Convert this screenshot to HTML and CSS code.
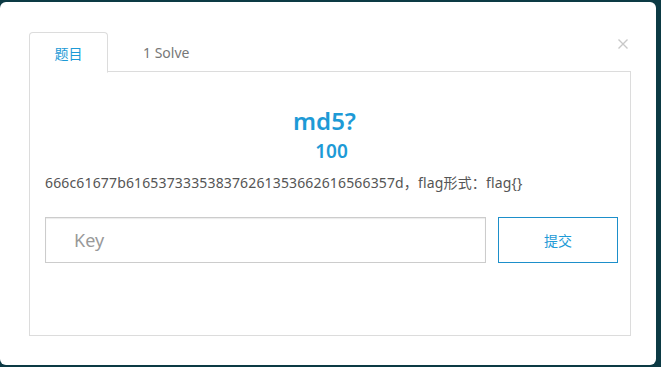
FILE: index.html
```html
<!DOCTYPE html>
<html lang="zh">
<head>
<meta charset="utf-8">
<link rel="stylesheet" href="styles.css">
</head>
<body>
<div class="modal">
  <svg class="close" width="10" height="10" viewBox="0 0 10 10"><path d="M0.5 0.5L9.5 9.5M9.5 0.5L0.5 9.5" stroke="#c8c8c8" stroke-width="1.4" fill="none"/></svg>
  <div class="tabs">
    <div class="tab active">题目</div>
    <div class="tab">1 Solve</div>
  </div>
  <div class="panel">
    <h2 class="title">md5?</h2>
    <div class="score">100</div>
    <p class="desc">666c61677b616537333538376261353662616566357d，flag形式：flag{}</p>
    <div class="form">
      <input class="key" type="text" placeholder="Key">
      <button class="submit">提交</button>
    </div>
  </div>
</div>
</body>
</html>
```
FILE: styles.css
```css
* { box-sizing: border-box; }
html, body { margin: 0; padding: 0; }
body {
  width: 661px;
  height: 367px;
  overflow: hidden;
  background: #0c3a44;
  font-family: "Noto Sans", "Noto Sans CJK SC", sans-serif;
}
.modal {
  position: relative;
  width: 656px;
  height: 363px;
  margin-top: 2px;
  background: #fff;
  border-radius: 6px;
  padding: 30px 25px 29px 29px;
  display: flex;
  flex-direction: column;
}
.close {
  position: absolute;
  left: 618px;
  top: 37px;
}
.tabs {
  display: flex;
  height: 40px;
  border-bottom: 1px solid #dcdcdc;
}
.tab {
  width: 79px;
  height: 40px;
  font-size: 14px;
  color: #777;
  display: flex;
  align-items: center;
  justify-content: center;
}
.tab.active {
  color: #1d9ad6;
  border: 1px solid #dcdcdc;
  border-bottom: 1px solid #fff;
  border-radius: 4px 4px 0 0;
  height: 41px;
  background: #fff;
}
.tab + .tab {
  width: auto;
  padding-left: 35px;
}
.panel {
  flex: 1;
  border: 1px solid #dcdcdc;
  border-top: none;
  padding: 0 12px 0 15px;
}
.title {
  margin: 34px 0 0;
  padding-right: 14px;
  text-align: center;
  font-size: 24px;
  font-weight: 600;
  line-height: 30px;
  color: #1d9ad6;
}
.score {
  text-align: center;
  font-size: 19px;
  font-weight: 600;
  line-height: 24px;
  margin-top: 3px;
  color: #1d9ad6;
}
.desc {
  margin: 10px 0 0;
  font-size: 14px;
  letter-spacing: 0.15px;
  line-height: 20px;
  color: #555;
}
.form {
  display: flex;
  gap: 12px;
  margin-top: 24px;
}
.key {
  width: 441px;
  height: 46px;
  border: 1px solid #ccc;
  box-shadow: inset 0 1px 1px rgba(0,0,0,0.08);
  padding: 0 28px;
  font-size: 18px;
  font-family: "Noto Sans", "Noto Sans CJK SC", sans-serif;
  color: #555;
  outline: none;
}
.key::placeholder { color: #999; }
.submit {
  width: 120px;
  height: 46px;
  background: #fff;
  border: 1px solid #1d8fca;
  color: #1d9ad6;
  font-size: 14px;
  font-family: "Noto Sans CJK SC", sans-serif;
}
```
